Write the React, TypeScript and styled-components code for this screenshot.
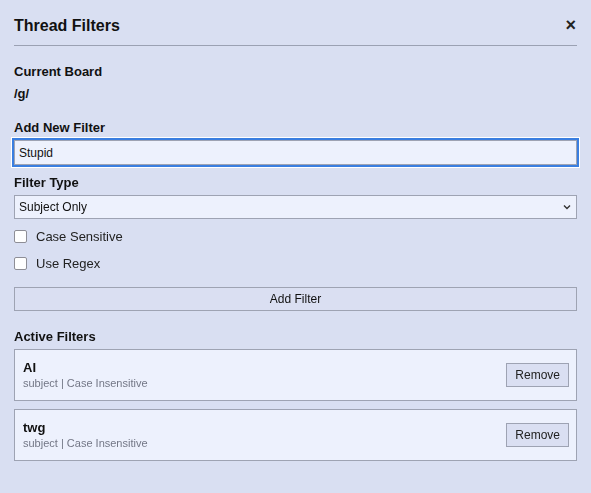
import React, { useEffect, useRef, useState } from "react";
import styled, { createGlobalStyle } from "styled-components";

const Global = createGlobalStyle`
  html, body { margin: 0; padding: 0; background: #d9dff2; }
  body { font-family: "Liberation Sans", Arial, sans-serif; color: #111; }
  * { box-sizing: border-box; }
`;

const Panel = styled.div`
  padding: 16px 14px;
  background: #d9dff2;
  min-height: 493px;
`;

const Header = styled.div`
  display: flex;
  align-items: center;
  justify-content: space-between;
  padding-bottom: 10px;
  border-bottom: 1px solid #9ba1b3;
`;

const Title = styled.h2`
  margin: 0;
  font-size: 16px;
  line-height: 19px;
  font-weight: bold;
  color: #111;
`;

const Close = styled.button`
  border: none;
  background: none;
  padding: 0;
  margin: 0 1px 0 0;
  font-family: "Liberation Sans", Arial, sans-serif;
  font-size: 18px;
  line-height: 19px;
  font-weight: bold;
  color: #222;
  cursor: pointer;
`;

const Label = styled.div<{ $top: number; $bottom?: number }>`
  margin-top: ${(p) => p.$top}px;
  margin-bottom: ${(p) => p.$bottom ?? 0}px;
  font-size: 13px;
  line-height: 15px;
  font-weight: bold;
  color: #111;
`;

const BoardName = styled.div`
  margin-top: 7px;
  font-size: 13px;
  line-height: 15px;
  font-weight: bold;
  color: #111;
`;

const TextInput = styled.input<{ $focused: boolean }>`
  display: block;
  width: 100%;
  height: 25px;
  padding: 0 4px;
  font-family: "Liberation Sans", Arial, sans-serif;
  font-size: 12px;
  color: #111;
  caret-color: #111;
  background: #edf1fd;
  border: 1px solid #9ea3b3;
  border-radius: 0;
  outline: ${(p) => (p.$focused ? "2px solid #3a7ee0" : "none")};
  box-shadow: ${(p) => (p.$focused ? "0 0 0 3px #ffffff" : "none")};
  &:focus {
    outline: 2px solid #3a7ee0;
    box-shadow: 0 0 0 3px #ffffff;
  }
`;

const SelectWrap = styled.div`
  position: relative;
`;

const Select = styled.select`
  display: block;
  width: 100%;
  height: 24px;
  padding: 0 20px 0 4px;
  font-family: "Liberation Sans", Arial, sans-serif;
  font-size: 12px;
  color: #111;
  background: #edf1fd;
  border: 1px solid #9ea3b3;
  border-radius: 0;
  appearance: none;
  -webkit-appearance: none;
  outline: none;
`;

const Chevron = styled.svg`
  position: absolute;
  right: 6px;
  top: 9px;
  width: 8px;
  height: 6px;
  pointer-events: none;
`;

const CheckRow = styled.label<{ $top: number }>`
  display: flex;
  align-items: center;
  height: 15px;
  margin-top: ${(p) => p.$top}px;
  font-size: 13px;
  color: #222;
  cursor: pointer;
`;

const Check = styled.input`
  appearance: none;
  -webkit-appearance: none;
  width: 13px;
  height: 13px;
  margin: 0 9px 0 0;
  background: #ffffff;
  border: 1px solid #8e8e96;
  border-radius: 2px;
  &:checked {
    background: #3a7ee0;
    border-color: #3a7ee0;
  }
`;

const WideButton = styled.button`
  display: block;
  width: 100%;
  height: 24px;
  margin-top: 16px;
  font-family: "Liberation Sans", Arial, sans-serif;
  font-size: 12px;
  color: #111;
  background: #dadff2;
  border: 1px solid #9ea3b3;
  border-radius: 0;
  cursor: pointer;
`;

const FilterList = styled.div`
  display: flex;
  flex-direction: column;
  gap: 8px;
  margin-top: 5px;
`;

const Card = styled.div`
  display: flex;
  align-items: center;
  justify-content: space-between;
  padding: 10px 7px 10px 8px;
  background: #edf1fd;
  border: 1px solid #9ea3b3;
`;

const CardText = styled.div`
  display: flex;
  flex-direction: column;
  gap: 2px;
`;

const CardTitle = styled.div`
  font-size: 13px;
  line-height: 15px;
  font-weight: bold;
  color: #111;
`;

const CardMeta = styled.div`
  font-size: 11px;
  line-height: 13px;
  color: #737786;
`;

const SmallButton = styled.button`
  height: 24px;
  padding: 0 8px;
  font-family: "Liberation Sans", Arial, sans-serif;
  font-size: 12px;
  color: #222;
  background: #dadff2;
  border: 1px solid #9ea3b3;
  border-radius: 0;
  cursor: pointer;
`;

const filters = [
  { term: "AI", field: "subject", sensitive: false },
  { term: "twg", field: "subject", sensitive: false },
];

export default function App() {
  const [text, setText] = useState("Stupid");
  const ref = useRef<HTMLInputElement>(null);
  useEffect(() => {
    const el = ref.current;
    if (el) {
      el.focus();
      el.setSelectionRange(el.value.length, el.value.length);
    }
  }, []);
  return (
    <>
      <Global />
      <Panel>
        <Header>
          <Title>Thread Filters</Title>
          <Close aria-label="Close">×</Close>
        </Header>

        <Label $top={18}>Current Board</Label>
        <BoardName>/g/</BoardName>

        <Label $top={19} $bottom={5}>Add New Filter</Label>
        <TextInput
          ref={ref}
          $focused
          value={text}
          onChange={(e) => setText(e.target.value)}
        />

        <Label $top={10} $bottom={5}>Filter Type</Label>
        <SelectWrap>
          <Select defaultValue="subject">
            <option value="subject">Subject Only</option>
            <option value="comment">Comment Only</option>
            <option value="both">Subject and Comment</option>
          </Select>
          <Chevron viewBox="0 0 8 6" aria-hidden="true">
            <path d="M1 1.5 L4 4.5 L7 1.5" fill="none" stroke="#333" strokeWidth="1.4" />
          </Chevron>
        </SelectWrap>

        <CheckRow $top={10}>
          <Check type="checkbox" />
          Case Sensitive
        </CheckRow>
        <CheckRow $top={12}>
          <Check type="checkbox" />
          Use Regex
        </CheckRow>

        <WideButton>Add Filter</WideButton>

        <Label $top={18}>Active Filters</Label>
        <FilterList>
          {filters.map((f) => (
            <Card key={f.term}>
              <CardText>
                <CardTitle>{f.term}</CardTitle>
                <CardMeta>
                  {f.field} | {f.sensitive ? "Case Sensitive" : "Case Insensitive"}
                </CardMeta>
              </CardText>
              <SmallButton>Remove</SmallButton>
            </Card>
          ))}
        </FilterList>
      </Panel>
    </>
  );
}
